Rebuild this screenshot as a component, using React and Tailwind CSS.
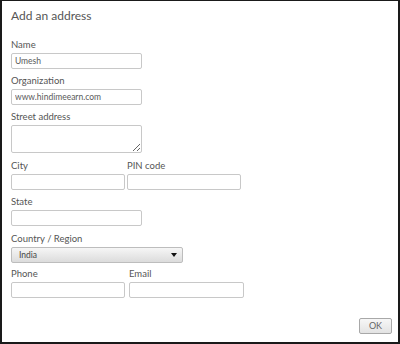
import React from "react";

const font = { fontFamily: 'Lato, "Open Sans", "Liberation Sans", sans-serif' };

function Label({ children }) {
  return <div className="text-[9.5px] leading-[12px] h-[12px] mb-[2px] text-[#555] whitespace-nowrap">{children}</div>;
}

function Field({ label, value = "", w, mt, h = "h-[16px]" }) {
  return (
    <div className={mt}>
      <Label>{label}</Label>
      <input
        readOnly
        value={value}
        className={`${w} ${h} block border border-[#c8c8c8] rounded-[2px] bg-white pl-[3px] pr-[3px] text-[8.5px] text-[#595959] outline-none`}
      />
    </div>
  );
}

export default function App() {
  return (
    <div
      style={font}
      className="w-[400px] h-[344px] bg-white border-[#1a1a1a] border-t border-x-2 border-b-2 flex flex-col pl-[9px] pt-[7px]"
    >
      <div className="text-[12px] leading-[16px] text-[#555]">Add an address</div>

      <Field label="Name" value="Umesh" w="w-[131px]" mt="mt-[15px]" />
      <Field label="Organization" value="www.hindimeearn.com" w="w-[131px]" mt="mt-[6px]" />

      <div className="mt-[6px]">
        <Label>Street address</Label>
        <textarea
          readOnly
          className="block w-[131px] h-[28px] border border-[#c8c8c8] rounded-[2px] bg-white text-[9px] outline-none"
        />
      </div>

      <div className="mt-[7px] flex gap-[2px]">
        <Field label="City" w="w-[114px]" />
        <Field label="PIN code" w="w-[114px]" />
      </div>

      <Field label="State" w="w-[131px]" mt="mt-[6px]" />

      <div className="mt-[7px]">
        <Label>Country / Region</Label>
        <div className="w-[172px] h-[16px] border border-[#bdbdbd] rounded-[2px] bg-gradient-to-b from-[#f6f6f6] to-[#dcdcdc] flex items-center justify-between pl-[7px] pr-[5px]">
          <span className="text-[8.5px] text-[#444] leading-none">India</span>
          <svg width="6" height="4" viewBox="0 0 6 4">
            <path d="M0 0 L6 0 L3 4 Z" fill="#111" />
          </svg>
        </div>
      </div>

      <div className="mt-[5px] flex gap-[4px]">
        <Field label="Phone" w="w-[114px]" />
        <Field label="Email" w="w-[115px]" />
      </div>

      <div className="mt-auto mb-[8px] mr-[6px] flex justify-end">
        <div className="w-[33px] h-[16px] border border-[#a8a8a8] rounded-[2px] bg-gradient-to-b from-[#f7f7f7] to-[#e3e3e3] flex items-center justify-center text-[9px] text-[#666]">
          OK
        </div>
      </div>
    </div>
  );
}
